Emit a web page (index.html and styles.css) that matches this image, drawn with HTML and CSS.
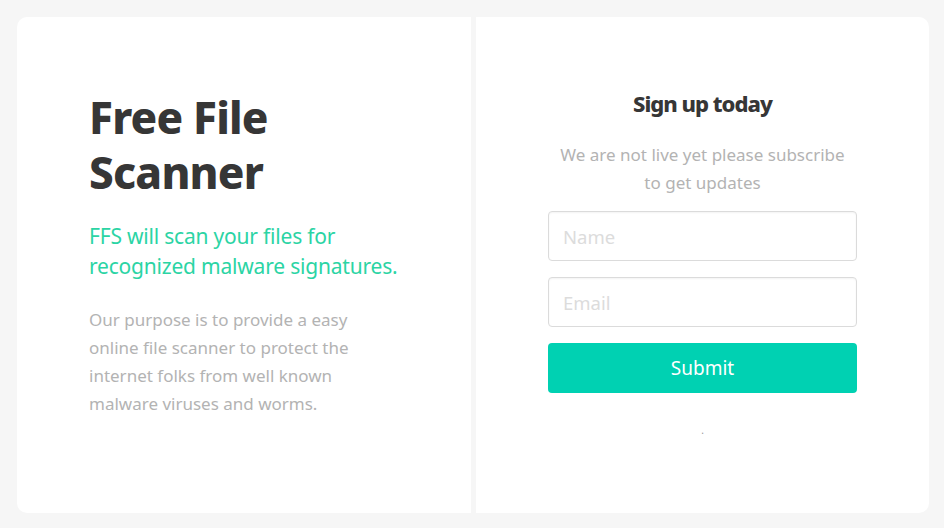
FILE: index.html
```html
<!DOCTYPE html>
<html lang="en">
<head>
<meta charset="utf-8">
<title>Free File Scanner</title>
<link rel="stylesheet" href="styles.css">
</head>
<body>
<main class="card">
  <section class="intro">
    <h1 class="title">Free File Scanner</h1>
    <h2 class="subtitle">FFS will scan your files for recognized malware signatures.</h2>
    <p class="lead">Our purpose is to provide a easy online file scanner to protect the internet folks from well known malware viruses and worms.</p>
  </section>
  <section class="signup">
    <h3 class="signup-title">Sign up today</h3>
    <p class="signup-text">We are not live yet please subscribe to get updates</p>
    <form class="form">
      <input class="input" type="text" placeholder="Name">
      <input class="input" type="email" placeholder="Email">
      <button class="button" type="button">Submit</button>
    </form>
    <div class="dot">.</div>
  </section>
</main>
</body>
</html>
```
FILE: styles.css
```css
* { box-sizing: border-box; }
html, body { margin: 0; padding: 0; }
body {
  background: #f6f6f6;
  font-family: "Noto Sans", "Open Sans", sans-serif;
  padding: 17px 15px 15px 17px;
  height: 528px;
}
.card {
  display: grid;
  grid-template-columns: 454px 1fr;
  gap: 5px;
  height: 496px;
  border-radius: 10px;
  overflow: hidden;
}
.intro, .signup {
  background: #fff;
}
.intro {
  padding: 73px 46px 0 72px;
}
.title {
  margin: 0;
  font-size: 44px;
  line-height: 55px;
  font-weight: 800;
  letter-spacing: -0.8px;
  color: #363636;
}
.subtitle {
  margin: 21px 0 0 0;
  font-size: 21px;
  line-height: 30px;
  font-weight: 400;
  letter-spacing: -0.2px;
  color: #2bd4a4;
}
.lead {
  margin: 25px 0 0 0;
  max-width: 282px;
  font-size: 17px;
  line-height: 28px;
  color: #b3b3b3;
}
.signup {
  padding-top: 72px;
  display: flex;
  flex-direction: column;
  align-items: center;
}
.signup-title {
  margin: 0;
  font-size: 22px;
  line-height: 28px;
  font-weight: 800;
  letter-spacing: -1px;
  color: #363636;
}
.signup-text {
  margin: 24px 0 0 0;
  width: 300px;
  text-align: center;
  font-size: 17px;
  line-height: 28px;
  color: #b3b3b3;
}
.form {
  margin-top: 14px;
  width: 309px;
  display: flex;
  flex-direction: column;
  gap: 16px;
}
.input {
  height: 50px;
  border: 1px solid #dbdbdb;
  border-radius: 4px;
  padding: 0 14px;
  font-family: inherit;
  font-size: 18.5px;
  color: #363636;
  box-shadow: inset 0 1px 2px rgba(10,10,10,0.05);
}
.input::placeholder { color: #dcdcdc; }
.button {
  height: 50px;
  border: 0;
  border-radius: 4px;
  background: #00d1b2;
  color: #fff;
  font-family: inherit;
  font-size: 19px;
}
.dot {
  margin-top: 27px;
  font-size: 10px;
  line-height: 20px;
  color: #999;
}
```
